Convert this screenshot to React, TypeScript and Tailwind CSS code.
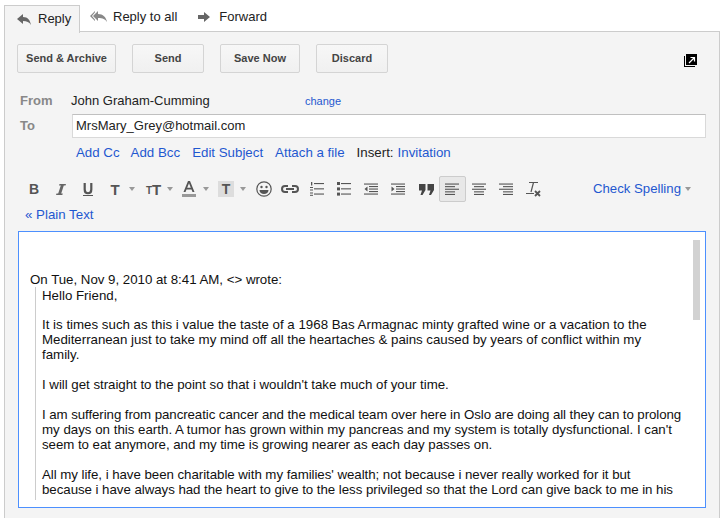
import React from "react";

const Caret = ({ ml = 6 }: { ml?: number }) => (
  <svg width="6" height="4" viewBox="0 0 6 4" className="shrink-0" style={{ marginLeft: ml }}><path d="M0 0h6L3 4z" fill="#999" /></svg>
);

const Lines = ({ rows }: { rows: [number, number][] }) => (
  <svg width="14" height="12" viewBox="0 0 14 12" fill="#555" className="block">
    {rows.map(([x, w], i) => <rect key={i} x={x} y={0.5 + i * 2.6} width={w} height="1.100" />)}
  </svg>
);

const Cell = ({ w, pl, cls = "", children }: { w: number; pl: number; cls?: string; children?: React.ReactNode }) => (
  <div className={`flex items-center h-[26px] shrink-0 ${cls}`} style={{ width: w, paddingLeft: pl }}>{children}</div>
);

const Btn = ({ w, children }: { w: number; children: React.ReactNode }) => (
  <div style={{ width: w }} className="h-[29px] flex items-center justify-center rounded-[2px] border border-[#d4d4d4] bg-gradient-to-b from-[#f7f7f7] to-[#f0f0f0] text-[11px] font-bold text-[#444]">{children}</div>
);

const Link = ({ children, cls = "" }: { children: React.ReactNode; cls?: string }) => (
  <span className={`text-[#1f58d0] ${cls}`}>{children}</span>
);

export default function App() {
  return (
    <div className="w-[724px] h-[518px] overflow-hidden bg-white relative text-[#222] font-['Liberation_Sans',Arial,sans-serif]">
      {/* tab row */}
      <div className="flex h-[32px] items-end pl-[4px]">
        <div className="w-[76px] h-[28px] flex items-center border border-b-0 border-[#ccc] bg-[#f4f4f4] relative top-[1px] z-10 pl-[12px] pb-[1px] text-[13px]">
          <svg width="14" height="11" viewBox="0 0 14 11" fill="#666" className="mr-[7px]"><path d="M0 5 6 0v3c5 0 7 3 8 8-2-3-4-4-8-4v3z" /></svg>
          <span>Reply</span>
        </div>
        <div className="flex items-center h-[27px] pl-[10px] text-[13px] relative top-[-2px]">
          <svg width="17" height="11" viewBox="0 0 17 11" fill="#888" className="mr-[6px]"><path d="M3 5 8 0v3c5 0 8 3 9 8-2-3-4-4-9-4v3z" /><path d="M5 0 0 5l5 5V8.800L2 5l3-3.800z" /></svg>
          <span>Reply to all</span>
          <svg width="12" height="10" viewBox="0 0 12 10" fill="#666" className="ml-[21px] mr-[9px]"><path d="M0 3h6V0l6 5-6 5V7H0z" /></svg>
          <span>Forward</span>
        </div>
      </div>

      {/* panel */}
      <div className="absolute left-[4px] top-[31px] w-[716px] h-[487px] border border-[#ccc] border-b-0 bg-[#f4f4f4] pt-[12px]">
        <div className="flex pl-[12px] gap-[16px] relative">
          <Btn w={99}>Send &amp; Archive</Btn>
          <Btn w={72}>Send</Btn>
          <Btn w={80}>Save Now</Btn>
          <Btn w={72}>Discard</Btn>
          <svg width="13" height="13" viewBox="0 0 13 13" className="absolute left-[679px] top-[10px]">
            <path d="M2 0h11v11H2z" fill="#000" />
            <path d="M0 2h1v10h10v1H0z" fill="#000" />
            <path d="M5 9l5-5M6.500 3.500H10.500V7.500" stroke="#fff" strokeWidth="1.200" fill="none" />
          </svg>
        </div>

        <div className="flex items-center h-[20px] mt-[18px] text-[13px]">
          <span className="w-[66px] pl-[15px] font-bold text-[#888]">From</span>
          <span className="w-[234px]">John Graham-Cumming</span>
          <Link cls="text-[11px]">change</Link>
        </div>
        <div className="flex items-center mt-[3px] text-[13px]">
          <span className="w-[67px] pl-[15px] font-bold text-[#888]">To</span>
          <div className="w-[634px] h-[24px] flex items-center pl-[3px] bg-white border border-[#d9d9d9] border-t-[#c0c0c0]">MrsMary_Grey@hotmail.com</div>
        </div>
        <div className="flex items-center h-[20px] mt-[5px] pl-[71px] text-[13.3px]">
          <Link cls="mr-[11px]">Add Cc</Link>
          <Link cls="mr-[12px]">Add Bcc</Link>
          <Link cls="mr-[12px]">Edit Subject</Link>
          <Link cls="mr-[12px]">Attach a file</Link>
          <span className="mr-[4px]">Insert:</span>
          <Link>Invitation</Link>
        </div>

        {/* toolbar */}
        <div className="flex items-center h-[28px] mt-[12px] pl-[15px] text-[#555]">
          <Cell w={27} pl={9}><span className="font-bold text-[14px]">B</span></Cell>
          <Cell w={27} pl={9}><svg width="10" height="11" viewBox="0 0 10 11" fill="#666"><path d="M3.500 0H10L9.500 1.600H7.800L5.200 9.400H6.800L6.300 11H0L.5 9.400H2.200L4.800 1.600H3z" /></svg></Cell>
          <Cell w={27} pl={9}><svg width="10" height="13" viewBox="0 0 10 13" fill="none" stroke="#555"><path d="M1.700 0v6.500c0 5 6.600 5 6.600 0V0" strokeWidth="2.200" /><path d="M0 12.500h10" strokeWidth="1" /></svg></Cell>
          <Cell w={38} pl={9}><span className="font-bold text-[15px] leading-none w-[10px] flex justify-center">T</span><Caret ml={9} /></Cell>
          <Cell w={38} pl={7}><span className="font-bold text-[10px] mt-[4px] leading-none">T</span><span className="font-bold text-[15px] leading-none">T</span><Caret ml={6} /></Cell>
          <Cell w={36} pl={5}><svg width="14" height="16" viewBox="0 0 14 16" fill="#555"><path d="M6 0h2l4.500 11H10.500l-1-2.600H4.500l-1 2.600H1.500zM5.200 6.700h3.600L7 2.200z" /><rect y="13" width="14" height="3" fill="#999" /></svg><Caret ml={7} /></Cell>
          <Cell w={37} pl={5}><div className="w-[16px] h-[16px] bg-[#ddd] flex items-center justify-center font-bold text-[14px]">T</div><Caret ml={6} /></Cell>
          <Cell w={26} pl={6}><svg width="16" height="16" viewBox="0 0 16 16"><circle cx="8" cy="8" r="7.200" fill="none" stroke="#555" strokeWidth="1.200" /><circle cx="5.500" cy="6" r="1.200" fill="#555" /><circle cx="10.500" cy="6" r="1.200" fill="#555" /><path d="M3.500 9h9c0 2.500-2 4-4.500 4s-4.500-1.500-4.500-4z" fill="#555" /></svg></Cell>
          <Cell w={28} pl={5}><svg width="18" height="8" viewBox="0 0 18 8" fill="none" stroke="#555" strokeWidth="2"><path d="M7 1H4a3 3 0 0 0 0 6h3M11 1h3a3 3 0 0 1 0 6h-3M5 4h8" /></svg></Cell>
          <Cell w={27} pl={6}><svg width="14" height="14" viewBox="0 0 14 14" fill="#555"><rect x="4" y="1" width="10" height="1.100" /><rect x="4" y="6.300" width="10" height="1.100" /><rect x="4" y="11.500" width="10" height="1.100" /><rect x="1" y="0" width="1.300" height="3.500" /><rect x="0" y="5" width="3" height="1" /><rect x="0" y="7.500" width="3" height="1" /><rect x="0" y="10.500" width="3" height="1" /><rect x="0" y="12.800" width="3" height="1" /></svg></Cell>
          <Cell w={27} pl={6}><svg width="14" height="14" viewBox="0 0 14 14" fill="#555"><rect x="4" y="1" width="10" height="1.100" /><rect x="4" y="6.300" width="10" height="1.100" /><rect x="4" y="11.500" width="10" height="1.100" /><rect x="0" y="0" width="3" height="3" /><rect x="0" y="5.400" width="3" height="3" /><rect x="0" y="10.600" width="3" height="3" /></svg></Cell>
          <Cell w={27} pl={6}><svg width="14" height="12" viewBox="0 0 14 12" fill="#555"><rect width="14" height="1.100" y="0.500" /><rect width="9" height="1.100" x="5" y="3" /><rect width="9" height="1.100" x="5" y="5.500" /><rect width="9" height="1.100" x="5" y="8" /><rect width="14" height="1.100" y="10.500" /><path d="M3.500 3.500v5L0.500 6z" /></svg></Cell>
          <Cell w={27} pl={6}><svg width="14" height="12" viewBox="0 0 14 12" fill="#555"><rect width="14" height="1.100" y="0.500" /><rect width="9" height="1.100" x="5" y="3" /><rect width="9" height="1.100" x="5" y="5.500" /><rect width="9" height="1.100" x="5" y="8" /><rect width="14" height="1.100" y="10.500" /><path d="M0.500 3.500v5L3.500 6z" /></svg></Cell>
          <Cell w={27} pl={7}><svg width="15" height="11" viewBox="0 0 15 11" fill="#444"><path d="M0 0h6.500v6L3.500 11H1.500L3 6.500H0zM8.500 0H15v6l-3 5h-2l1.500-4.500h-3z" /></svg></Cell>
          <Cell w={27} pl={5} cls="rounded-[2px] border border-[#ccc] bg-[#e8e8e8]"><Lines rows={[[0, 14], [0, 10], [0, 14], [0, 10], [0, 10]]} /></Cell>
          <Cell w={27} pl={6}><Lines rows={[[0, 14], [2, 10], [0, 14], [2, 10], [2, 10]]} /></Cell>
          <Cell w={27} pl={6}><Lines rows={[[0, 14], [4, 10], [0, 14], [4, 10], [4, 10]]} /></Cell>
          <Cell w={27} pl={6}><svg width="15" height="15" viewBox="0 0 15 15"><path d="M0 11.500h8" stroke="#555" strokeWidth="1" /><path d="M3 0.500h9M7.500 0.500 5 10" stroke="#555" strokeWidth="1.200" fill="none" /><path d="M9 9l5 5M14 9l-5 5" stroke="#555" strokeWidth="1.800" /></svg></Cell>
          <div className="ml-[46px] flex items-center text-[13.2px] shrink-0"><Link>Check Spelling</Link><Caret ml={4} /></div>
        </div>

        <div className="h-[20px] mt-[2px] pl-[20px] flex items-center text-[13.3px]"><Link>« Plain Text</Link></div>

        {/* editor */}
        <div className="ml-[13px] mt-[6px] w-[688px] h-[277px] bg-white border border-[#4d90fe] relative">
          <div className="text-[13.3px] leading-[15px] pl-[11px] pt-[40px] w-[672px] h-[268px] overflow-hidden text-[#111]">
            <div className="tracking-[-0.02px]">On Tue, Nov 9, 2010 at 8:41 AM, &lt;&gt; wrote:</div>
            <div className="ml-[5px] pl-[6px] pt-[1px] border-l border-[#ccc] h-[300px]">
              <p>Hello Friend,</p>
              <p className="mt-[14px]">It is times such as this i value the taste of a 1968 Bas Armagnac minty grafted wine or a vacation to the<br /><span className="tracking-[-0.03px]">Mediterranean just to take my mind off all the heartaches &amp; pains caused by years of conflict within my</span><br />family.</p>
              <p className="mt-[15px] tracking-[-0.03px]">I will get straight to the point so that i wouldn't take much of your time.</p>
              <p className="mt-[15px]"><span className="tracking-[-0.08px]">I am suffering from pancreatic cancer and the medical team over here in Oslo are doing all they can to prolong</span><br />my days on this earth. A tumor has grown within my pancreas and my system is totally dysfunctional. I can't<br /><span className="tracking-[-0.05px]">seem to eat anymore, and my time is growing nearer as each day passes on.</span></p>
              <p className="mt-[15px] tracking-[-0.05px]">All my life, i have been charitable with my families' wealth; not because i never really worked for it but<br />because i have always had the heart to give to the less privileged so that the Lord can give back to me in his<br />mercy and forgiveness. I will not be able to continue this because my time is almost over and i have no one to</p>
            </div>
          </div>
          <div className="absolute right-[5px] top-[8px] w-[7px] h-[80px] bg-[#d2d2d2]"></div>
        </div>
      </div>
    </div>
  );
}
